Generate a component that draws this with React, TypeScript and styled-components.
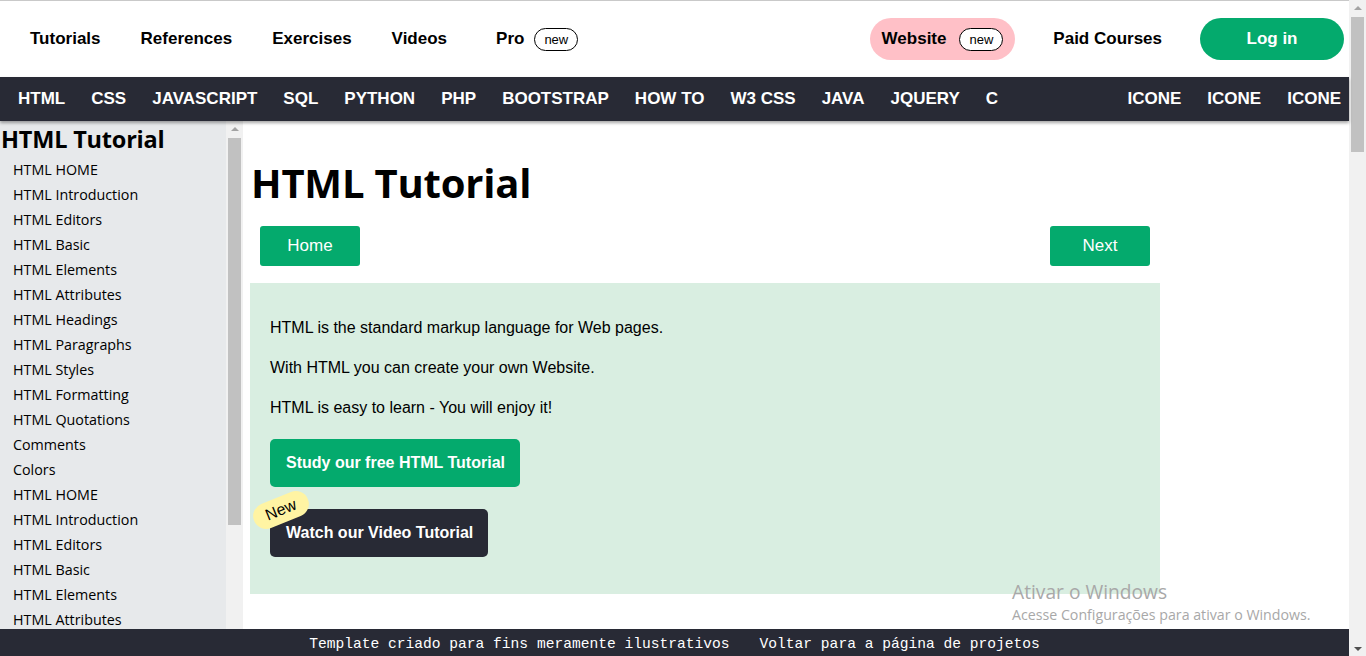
import * as React from 'react'
import styled, { createGlobalStyle } from 'styled-components'

const GlobalStyle = createGlobalStyle`
  html, body {
    margin: 0;
    padding: 0;
    overflow: hidden;
  }
  * {
    box-sizing: border-box;
  }
`

const GREEN = '#04AA6D'
const DARK = '#282A35'

const Frame = styled.div`
  display: flex;
  width: 100vw;
  height: 100vh;
  font-family: 'Liberation Sans', Arial, sans-serif;
  color: #000;
`

const Page = styled.div`
  position: relative;
  flex: 1;
  min-width: 0;
  display: flex;
  flex-direction: column;
  border-top: 1px solid #c9c9c9;
`

const TopBar = styled.header`
  height: 76px;
  display: flex;
  align-items: center;
  padding: 0 5px 0 10px;
  background: #fff;
`

const TopLink = styled.a<{ $extra?: number }>`
  display: flex;
  align-items: center;
  gap: 10px;
  padding: 0 20px;
  margin-left: ${(p) => p.$extra ?? 0}px;
  font-size: 17px;
  font-weight: bold;
  color: #000;
  text-decoration: none;
  white-space: nowrap;
`

const NewTag = styled.span`
  display: inline-flex;
  align-items: center;
  height: 23px;
  padding: 0 9px;
  border: 1px solid #000;
  border-radius: 12px;
  background: #fff;
  font-size: 13px;
  font-weight: normal;
`

const RightGroup = styled.div`
  margin-left: auto;
  display: flex;
  align-items: center;
  gap: 38px;
`

const WebsitePill = styled.a`
  display: flex;
  align-items: center;
  gap: 13px;
  height: 42px;
  padding: 0 12px;
  border-radius: 21px;
  background: #ffc0c7;
  font-size: 17px;
  font-weight: bold;
  color: #000;
  text-decoration: none;
`

const PlainLink = styled.a`
  font-size: 17px;
  font-weight: bold;
  color: #000;
  text-decoration: none;
`

const LoginButton = styled.a`
  display: flex;
  align-items: center;
  justify-content: center;
  width: 144px;
  height: 42px;
  border-radius: 25px;
  background: ${GREEN};
  color: #fff;
  font-size: 17px;
  font-weight: bold;
  text-decoration: none;
`

const SubNav = styled.nav`
  position: relative;
  z-index: 2;
  height: 44px;
  display: flex;
  align-items: center;
  padding: 0 8px 0 18px;
  background: ${DARK};
  box-shadow: 0 2px 3px rgba(0, 0, 0, 0.35);
`

const NavGroup = styled.div<{ $right?: boolean }>`
  display: flex;
  gap: 26px;
  margin-left: ${(p) => (p.$right ? 'auto' : '0')};
`

const NavItem = styled.a`
  color: #fff;
  font-size: 17px;
  font-weight: bold;
  text-decoration: none;
  white-space: nowrap;
`

const Body = styled.div`
  flex: 1;
  min-height: 0;
  display: flex;
`

const Sidebar = styled.aside`
  width: 243px;
  flex-shrink: 0;
  display: flex;
  background: #e7e9eb;
  overflow: hidden;
`

const SideList = styled.div`
  width: 226px;
  overflow: hidden;
  font-family: 'Open Sans', 'Noto Sans', sans-serif;
`

const SideHeading = styled.h2`
  margin: 0;
  padding: 1px 0 0 1px;
  height: 36px;
  line-height: 35px;
  font-size: 23.5px;
  font-weight: bold;
  letter-spacing: -0.2px;
`

const SideItem = styled.a`
  display: block;
  padding-left: 13px;
  line-height: 25px;
  font-size: 14.3px;
  color: #000;
  text-decoration: none;
  white-space: nowrap;
`

const ScrollTrack = styled.div<{ $thumbTop: number; $thumbHeight: number }>`
  position: relative;
  width: 17px;
  flex-shrink: 0;
  background: #f1f1f1;
  display: flex;
  flex-direction: column;
  align-items: center;

  &::before {
    content: '';
    margin-top: ${(p) => p.$thumbTop}px;
    width: 13px;
    height: ${(p) => p.$thumbHeight}px;
    background: #c1c1c1;
  }
`

const Arrow = styled.span<{ $down?: boolean }>`
  position: absolute;
  left: 5px;
  ${(p) => (p.$down ? 'bottom: 5px;' : 'top: 6px;')}
  width: 0;
  height: 0;
  border-left: 4px solid transparent;
  border-right: 4px solid transparent;
  ${(p) =>
    p.$down ? 'border-top: 4px solid #505050;' : 'border-bottom: 4px solid #a3a3a3;'}
`

const Main = styled.main`
  flex: 1;
  padding-left: 7px;
`

const Title = styled.h1`
  margin: 38px 0 0;
  padding-left: 1px;
  height: 48px;
  line-height: 48px;
  font-family: 'Open Sans', 'Noto Sans', sans-serif;
  font-size: 40px;
  font-weight: bold;
  letter-spacing: -0.2px;
`

const PagerRow = styled.div`
  width: 910px;
  margin-top: 19px;
  padding: 0 10px;
  display: flex;
  justify-content: space-between;
`

const PagerButton = styled.a`
  display: flex;
  align-items: center;
  justify-content: center;
  width: 100px;
  height: 40px;
  border-radius: 3px;
  background: ${GREEN};
  color: #fff;
  font-size: 17px;
  text-decoration: none;
`

const Panel = styled.section`
  width: 910px;
  margin-top: 17px;
  padding: 35px 20px 37px;
  background: #d9eee1;
  display: flex;
  flex-direction: column;
  align-items: flex-start;
`

const Para = styled.p`
  margin: 0 0 20px;
  line-height: 20px;
  font-size: 16px;
`

const BigButton = styled.a<{ $dark?: boolean }>`
  position: relative;
  display: flex;
  align-items: center;
  height: 48px;
  margin-top: ${(p) => (p.$dark ? 22 : 1)}px;
  padding: 0 15px 0 16px;
  border-radius: 5px;
  background: ${(p) => (p.$dark ? DARK : GREEN)};
  color: #fff;
  font-size: 16px;
  font-weight: bold;
  text-decoration: none;
  white-space: nowrap;
`

const Ribbon = styled.span`
  position: absolute;
  left: -18px;
  top: -12px;
  width: 58px;
  height: 26px;
  border-radius: 13px;
  background: #fff4a3;
  color: #000;
  font-size: 16px;
  font-weight: normal;
  display: flex;
  align-items: center;
  justify-content: center;
  transform: rotate(-22deg);
`

const Footer = styled.footer`
  height: 27px;
  flex-shrink: 0;
  display: flex;
  align-items: center;
  justify-content: center;
  gap: 30px;
  padding-top: 2px;
  background: ${DARK};
  color: #fff;
  font-family: 'Liberation Mono', 'DejaVu Sans Mono', monospace;
  font-size: 14.6px;
`

const Watermark = styled.div`
  position: absolute;
  left: 1012px;
  top: 578px;
  font-family: 'Open Sans', 'Noto Sans', sans-serif;
  color: #a8a8a8;
  pointer-events: none;
`

const WatermarkTitle = styled.div`
  font-size: 19.2px;
  line-height: 26px;
`

const WatermarkSub = styled.div`
  font-size: 14.2px;
  line-height: 20px;
`

const sideItems = [
  'HTML HOME',
  'HTML Introduction',
  'HTML Editors',
  'HTML Basic',
  'HTML Elements',
  'HTML Attributes',
  'HTML Headings',
  'HTML Paragraphs',
  'HTML Styles',
  'HTML Formatting',
  'HTML Quotations',
  'Comments',
  'Colors',
  'HTML HOME',
  'HTML Introduction',
  'HTML Editors',
  'HTML Basic',
  'HTML Elements',
  'HTML Attributes',
]

const navLeft = ['HTML', 'CSS', 'JAVASCRIPT', 'SQL', 'PYTHON', 'PHP', 'BOOTSTRAP', 'HOW TO', 'W3 CSS', 'JAVA', 'JQUERY', 'C']
const navRight = ['ICONE', 'ICONE', 'ICONE']

export default function App() {
  return (
    <>
      <GlobalStyle />
      <Frame>
        <Page>
          <TopBar>
            <TopLink>Tutorials</TopLink>
            <TopLink>References</TopLink>
            <TopLink>Exercises</TopLink>
            <TopLink>Videos</TopLink>
            <TopLink $extra={9}>
              Pro <NewTag>new</NewTag>
            </TopLink>
            <RightGroup>
              <WebsitePill>
                Website <NewTag>new</NewTag>
              </WebsitePill>
              <PlainLink>Paid Courses</PlainLink>
              <LoginButton>Log in</LoginButton>
            </RightGroup>
          </TopBar>

          <SubNav>
            <NavGroup>
              {navLeft.map((n) => (
                <NavItem key={n}>{n}</NavItem>
              ))}
            </NavGroup>
            <NavGroup $right>
              {navRight.map((n, i) => (
                <NavItem key={i}>{n}</NavItem>
              ))}
            </NavGroup>
          </SubNav>

          <Body>
            <Sidebar>
              <SideList>
                <SideHeading>HTML Tutorial</SideHeading>
                {sideItems.map((s, i) => (
                  <SideItem key={i}>{s}</SideItem>
                ))}
              </SideList>
              <ScrollTrack $thumbTop={17} $thumbHeight={387}>
                <Arrow />
              </ScrollTrack>
            </Sidebar>

            <Main>
              <Title>HTML Tutorial</Title>
              <PagerRow>
                <PagerButton>Home</PagerButton>
                <PagerButton>Next</PagerButton>
              </PagerRow>
              <Panel>
                <Para>HTML is the standard markup language for Web pages.</Para>
                <Para>With HTML you can create your own Website.</Para>
                <Para>HTML is easy to learn - You will enjoy it!</Para>
                <BigButton>Study our free HTML Tutorial</BigButton>
                <BigButton $dark>
                  <Ribbon>New</Ribbon>
                  Watch our Video Tutorial
                </BigButton>
              </Panel>
            </Main>
          </Body>

          <Footer>
            <span>Template criado para fins meramente ilustrativos</span>
            <span>Voltar para a página de projetos</span>
          </Footer>

          <Watermark>
            <WatermarkTitle>Ativar o Windows</WatermarkTitle>
            <WatermarkSub>Acesse Configurações para ativar o Windows.</WatermarkSub>
          </Watermark>
        </Page>

        <ScrollTrack $thumbTop={17} $thumbHeight={135}>
          <Arrow />
          <Arrow $down />
        </ScrollTrack>
      </Frame>
    </>
  )
}
